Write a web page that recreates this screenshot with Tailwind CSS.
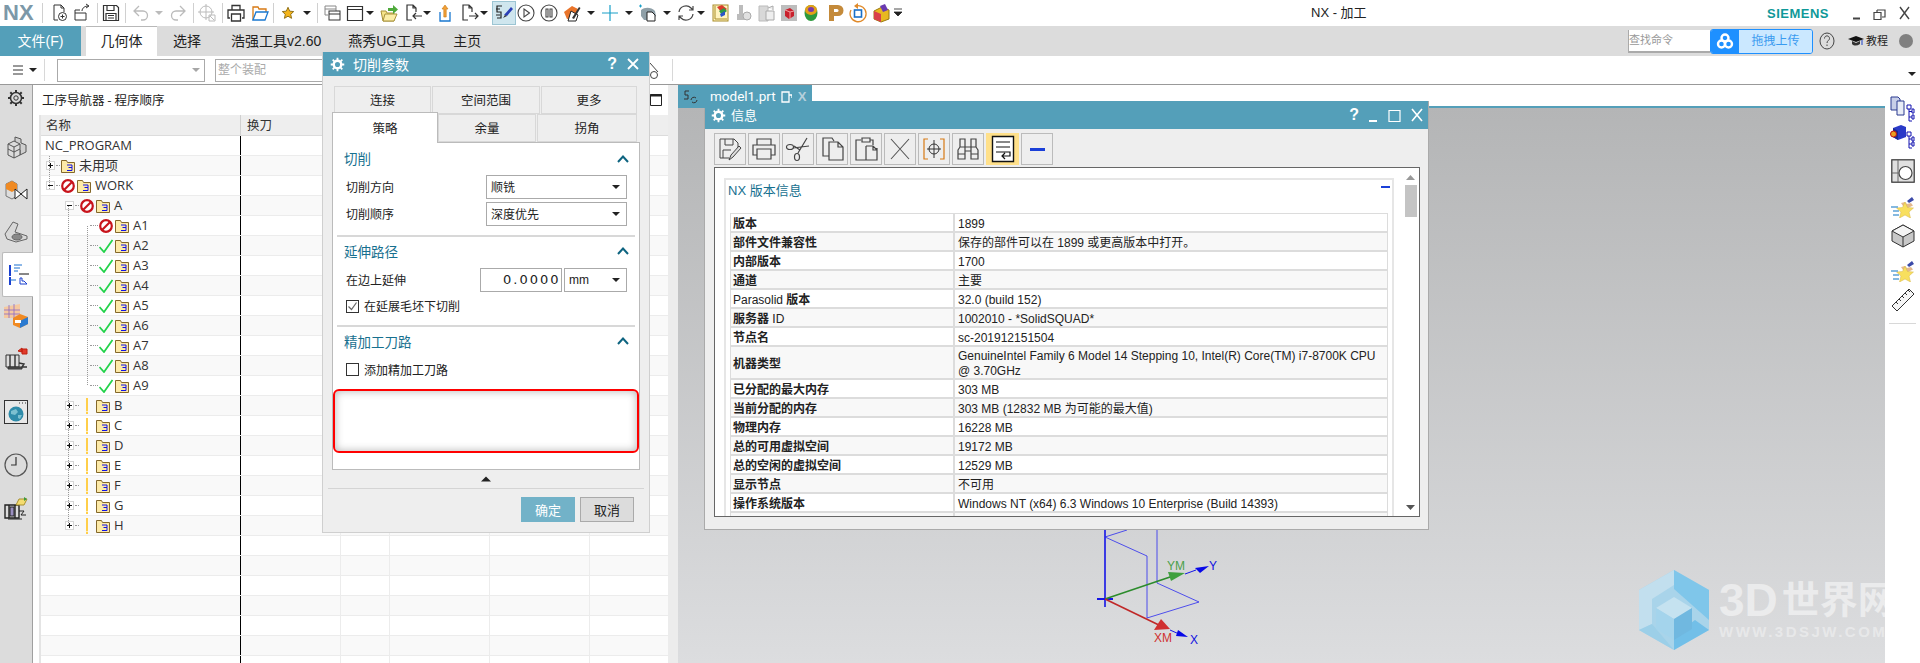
<!DOCTYPE html>
<html lang="zh">
<head>
    <meta charset="UTF-8">
    <title>NX - 加工</title>
    <script src="https://cdn.jsdelivr.net/npm/@tailwindcss/browser@4"></script>
</head>
<body class="bg-white text-[#222] font-['Liberation_Sans','Noto_Sans_CJK_SC',sans-serif] overflow-hidden">

<!-- shared icons -->
<svg class="hidden">
    <symbol id="dd" viewBox="0 0 8 20"><path d="M0 8h8l-4 4z" fill="#222"/></symbol>
    <symbol id="folder" viewBox="0 0 14 14">
        <path d="M.5 13.500V1.500h5l1 2h7v10z" fill="#fdeaa8" stroke="#84682a"/>
        <path d="M6 6h5v2.500H7.500M11 8.500v3H6" fill="none" stroke="#1212e6"/>
    </symbol>
    <symbol id="no" viewBox="0 0 14 14">
        <circle cx="7" cy="7" r="5.800" fill="#fff" stroke="#c8141c" stroke-width="2.200"/>
        <path d="M3 11L11 3" stroke="#c8141c" stroke-width="2.200"/>
    </symbol>
    <symbol id="check" viewBox="0 0 14 14"><path d="M.5 8l4.500 5L13.500 1" fill="none" stroke="#22d24a" stroke-width="1.800"/></symbol>
    <symbol id="plusbox" viewBox="0 0 9 9"><rect x=".5" y=".5" width="8" height="8" fill="#fff" stroke="#d5d5d5"/><path d="M2 4.500h5M4.500 2v5" stroke="#111"/></symbol>
    <symbol id="minusbox" viewBox="0 0 9 9"><rect x=".5" y=".5" width="8" height="8" fill="#fff" stroke="#d5d5d5"/><path d="M2 4.500h5" stroke="#111"/></symbol>
    <symbol id="gear" viewBox="0 0 20 20">
        <circle cx="10" cy="10" r="5" fill="none" stroke="currentColor" stroke-width="3.200"/>
        <path d="M10 1v3M10 16v3M1 10h3M16 10h3M3.600 3.600l2.200 2.200M14.200 14.200l2.200 2.200M3.600 16.400l2.200-2.200M14.200 5.800l2.200-2.200" stroke="currentColor" stroke-width="2.400"/>
    </symbol>
    <symbol id="gearthin" viewBox="0 0 20 20">
        <circle cx="10" cy="10" r="5.500" fill="none" stroke="currentColor" stroke-width="1.500"/>
        <circle cx="10" cy="10" r="2.200" fill="none" stroke="currentColor"/>
        <path d="M10 2v2.500M10 15.500V18M2 10h2.500M15.500 10H18M4.300 4.300L6 6M14 14l1.700 1.700M4.300 15.700L6 14M14 6l1.700-1.700" stroke="currentColor" stroke-width="2"/>
    </symbol>
    <symbol id="favhand" viewBox="0 0 24 24">
        <path d="M12 12l3 3 7-3.500-2-2.500-4 1-2-2-4 1z" fill="#e3b98f"/><path d="M16 7l5-4 2 3-5 3z" fill="#3c4aa8"/>
        <path d="M14 8l2.500 5.500 6 .5-4.500 4 1.500 6-5.500-3-5.500 3 1.500-6-4.500-4 6-.5z" fill="#f8df5e" stroke="#d6b648" stroke-width=".5"/>
        <path d="M0 13h7M2 17h6M2 21h6" stroke="#5da3d6" stroke-width="1.400"/>
    </symbol>
    <symbol id="tabupchev" viewBox="0 0 12 8"><path d="M1 7l5-5.500L11 7" fill="none" stroke="#0e6480" stroke-width="2"/></symbol>
</svg>

<div class="relative w-[1920px] h-[663px] overflow-hidden flex flex-col">

    <!-- title bar -->
    <div class="h-[26px] flex items-center shrink-0">
        <span class="ml-[3px] w-[34px] text-[22px] leading-none font-bold text-[#7c98a8]">NX</span>
        <span class="ml-[5px] w-px h-[20px] bg-[#d0d0d0]"></span>
        <svg class="ml-[7px] w-[20px] h-[20px]" viewBox="0 0 20 20" fill="none" stroke="#333"><path d="M8 17H4V2h7l3 3v4M11 2v3h3"/><circle cx="12.500" cy="13.500" r="4"/><path d="M10.500 13.500h4M12.500 11.500v4"/></svg>
        <svg class="ml-[2px] w-[20px] h-[20px]" viewBox="0 0 20 20" fill="none" stroke="#333"><path d="M3 10h11v7H3zM3 10V7h5M10 8c0-3 3-5 6-5M14 1l3 2-3 2"/></svg>
        <span class="ml-[5px] w-px h-[20px] bg-[#d0d0d0]"></span>
        <svg class="ml-[3px] w-[20px] h-[20px]" viewBox="0 0 20 20" fill="none" stroke="#333" stroke-width="1.200"><path d="M2.500 2.500h13l2 2v13h-15z"/><path d="M6 2.500v5h7v-5M5 17.500v-7h10v7M7 12.500h6M7 15h6"/></svg>
        <span class="ml-[4px] w-px h-[20px] bg-[#d0d0d0]"></span>
        <svg class="ml-[5px] w-[20px] h-[20px]" viewBox="0 0 20 20" fill="none" stroke="#bbb" stroke-width="1.300"><path d="M8 3L3 8l5 5M3 8h9a4.500 4.500 0 0 1 0 9h-2"/></svg>
        <svg class="ml-[4px] w-[8px] h-[20px] opacity-30"><use href="#dd"/></svg>
        <svg class="ml-[5px] w-[20px] h-[20px]" viewBox="0 0 20 20" fill="none" stroke="#bbb" stroke-width="1.300"><path d="M12 3l5 5-5 5M17 8H8a4.500 4.500 0 0 0 0 9h2"/></svg>
        <span class="ml-[5px] w-px h-[20px] bg-[#d0d0d0]"></span>
        <svg class="ml-[3px] w-[20px] h-[20px]" viewBox="0 0 20 20" fill="none" stroke="#bbb"><circle cx="9" cy="9" r="6"/><path d="M9 1v16M1 9h16M12 12h6v6h-6zM13 13l4 4"/></svg>
        <span class="ml-[5px] w-px h-[20px] bg-[#d0d0d0]"></span>
        <svg class="ml-[3px] w-[20px] h-[20px]" viewBox="0 0 20 20" fill="none" stroke="#333" stroke-width="1.300"><path d="M6 7V2.500h8V7M4 15H2V7h16v8h-2M5.500 11h9v7h-9z"/></svg>
        <svg class="ml-[4px] w-[20px] h-[20px]" viewBox="0 0 20 20" fill="none" stroke="#1a78d0" stroke-width="1.300"><path d="M3 17V4h5l1 2h7v3" stroke="#d87a14"/><path d="M3 17l3-8h12l-3 8z"/></svg>
        <span class="ml-[3px] w-px h-[20px] bg-[#d0d0d0]"></span>
        <svg class="ml-[4px] w-[20px] h-[20px]" viewBox="-4 -4 28 28"><path d="M10 2l2.400 5.400 5.600.6-4.200 3.800 1.200 5.700-5-3-5 3 1.200-5.700L2 8l5.600-.6z" fill="#f4b41a" stroke="#8a6a10" stroke-width="1.300"/></svg>
        <svg class="ml-[5px] w-[8px] h-[20px]"><use href="#dd"/></svg>
        <span class="ml-[6px] w-px h-[20px] bg-[#d0d0d0]"></span>
        <svg class="ml-[4px] w-[20px] h-[20px]" viewBox="0 0 20 20" fill="none" stroke="#888"><path d="M3 3h11v9h-2M3 3v9h3M3 6h11"/><rect x="7" y="8" width="11" height="9" fill="#fff" stroke="#333"/><path d="M7 11h11" stroke="#333"/></svg>
        <svg class="ml-[3px] w-[20px] h-[20px]" viewBox="0 0 20 20" fill="none" stroke="#333" stroke-width="1.200"><path d="M2.500 3.500h15v14h-15zM2.500 6.500h15"/></svg>
        <svg class="ml-px w-[8px] h-[20px]"><use href="#dd"/></svg>
        <svg class="ml-[5px] w-[20px] h-[20px]" viewBox="0 0 20 20"><path d="M2 8h5l1 2h7v8H4z" fill="#f6e48a" stroke="#a8923a"/><path d="M4 18L6 11h12l-3 7z" fill="#fbeea8" stroke="#a8923a"/><path d="M9 5h5V2l5 4.500L14 11V8H9z" fill="#4eaa3c"/></svg>
        <svg class="ml-[4px] w-[20px] h-[20px]" viewBox="0 0 20 20" fill="none" stroke="#333" stroke-width="1.200"><path d="M9 17H4V2h6l3 3v4M10 2v3h3M19 13h-9M13 10l-3 3 3 3"/></svg>
        <svg class="w-[8px] h-[20px]"><use href="#dd"/></svg>
        <svg class="ml-[4px] w-[20px] h-[20px]" viewBox="0 0 20 20" fill="none"><path d="M5 9v9h10V9" stroke="#1a78d0" stroke-width="1.300"/><path d="M10 2l3 4h-1.800v8H8.800V6H7z" fill="#f2a038" stroke="#c87810" stroke-width=".6"/></svg>
        <svg class="ml-[4px] w-[20px] h-[20px]" viewBox="0 0 20 20" fill="none" stroke="#333" stroke-width="1.200"><path d="M9 17H4V2h6l3 3v4M10 2v3h3M10 13h9M16 10l3 3-3 3"/></svg>
        <svg class="ml-px w-[8px] h-[20px]"><use href="#dd"/></svg>
        <div class="ml-[4px] w-[24px] h-[24px] bg-[#cfe6ee] border border-[#9cc5d3] flex items-center justify-center">
            <svg class="w-[20px] h-[20px]" viewBox="0 0 20 20" fill="none"><path d="M8 3H3v6h4v6H3M2 6h4M2 12h4" stroke="#222" stroke-width="1.200"/><path d="M10 12l7-8 2 2-6 7z" fill="#2b3fb6"/><path d="M9 15l2-3 2 1z" fill="#333"/></svg>
        </div>
        <svg class="w-[20px] h-[20px]" viewBox="0 0 20 20" fill="none" stroke="#444" stroke-width="1.100"><circle cx="10" cy="10" r="8"/><path d="M8 6l5.500 4L8 14z"/></svg>
        <svg class="ml-[3px] w-[20px] h-[20px]" viewBox="0 0 20 20" fill="none" stroke="#444" stroke-width="1.100"><circle cx="10" cy="10" r="8"/><path d="M7 6h2v8H7zM11 6h2v8h-2z"/></svg>
        <svg class="ml-[3px] w-[20px] h-[20px]" viewBox="0 0 20 20"><path d="M2 9l8-6 6 3-4 9-7 1z" fill="#e9742a"/><path d="M9 8l7 4-2 6H6z" fill="#fff" stroke="#222"/><path d="M10 15l7-11 1.500 1L12 16z" fill="#333"/></svg>
        <svg class="ml-[5px] w-[8px] h-[20px]"><use href="#dd"/></svg>
        <svg class="ml-[5px] w-[20px] h-[20px]" viewBox="0 0 20 20"><path d="M10 2v16M2 10h16" stroke="#1aa0c8" stroke-width="1.200"/></svg>
        <svg class="ml-[5px] w-[8px] h-[20px]"><use href="#dd"/></svg>
        <svg class="ml-[5px] w-[20px] h-[20px]" viewBox="0 0 20 20"><path d="M3 7c4-3 10-3 14 1l1 5-5 4H6L3 13z" fill="#8fa0a8"/><path d="M1 3l3 0M2.500 1.500v3" stroke="#1aa0c8"/><path d="M9 9h5l3 3v6H9z" fill="#fff" stroke="#222"/></svg>
        <svg class="ml-[5px] w-[8px] h-[20px]"><use href="#dd"/></svg>
        <svg class="ml-[5px] w-[20px] h-[20px]" viewBox="0 0 20 20" fill="none" stroke="#444" stroke-width="1.200"><path d="M3 9a7 7 0 0 1 12-4l2 2M17 3v4h-4M17 11a7 7 0 0 1-12 4l-2-2M3 17v-4h4"/></svg>
        <svg class="ml-px w-[8px] h-[20px]"><use href="#dd"/></svg>
        <svg class="ml-[5px] w-[20px] h-[20px]" viewBox="0 0 20 20"><rect x="3" y="2" width="15" height="16" fill="#fff4c0" stroke="#a88c28"/><path d="M7 4l5-2 5 4-5 4z" fill="#d93a2a"/><path d="M9 8l5-3 3 3-5 4z" fill="#2f9a44"/><path d="M10 11l5-3v4l-4 2z" fill="#2a55c8"/><path d="M5 3v13h12" stroke="#a88c28" fill="none"/></svg>
        <svg class="ml-[3px] w-[20px] h-[20px]" viewBox="0 0 20 20"><path d="M6 2h4v9h3v6H4v-6h2z" fill="#bcbcbc"/><circle cx="14" cy="13" r="4" fill="#e0e0e0" stroke="#aaa"/></svg>
        <svg class="ml-[3px] w-[20px] h-[20px]" viewBox="0 0 20 20"><path d="M3 3h9v15H3z" fill="#d8d8d8" stroke="#bbb"/><path d="M10 8h8v9h-8zM12 5l5-2v4" fill="#eee" stroke="#aaa"/></svg>
        <svg class="ml-[3px] w-[20px] h-[20px]" viewBox="0 0 20 20"><rect x="2" y="2" width="16" height="16" fill="#bdbdbd"/><path d="M6 7l5-2 4 3v5l-5 3-4-3z" fill="#c8202c"/><path d="M6 7l5 2 4-1M11 9v7" stroke="#f4a0a0" fill="none"/></svg>
        <svg class="ml-[2px] w-[20px] h-[20px]" viewBox="0 0 20 20"><ellipse cx="10" cy="10" rx="6.500" ry="8" fill="#2c9a3c"/><ellipse cx="10" cy="7" rx="6" ry="5" fill="#e2a018"/><ellipse cx="10" cy="6.500" rx="3" ry="2.500" fill="#7a3aa8"/></svg>
        <svg class="ml-[5px] w-[20px] h-[20px]" viewBox="0 0 20 20"><path d="M3 2h9a5.500 5.500 0 0 1 0 11H8v5H3z" fill="#c48a3a"/><path d="M8 6h3a1.500 1.500 0 0 1 0 3H8z" fill="#fff"/></svg>
        <svg class="ml-[2px] w-[20px] h-[20px]" viewBox="0 0 20 20" fill="none"><path d="M8 3a8 8 0 1 1-5 4" stroke="#e08a2a" stroke-width="1.300"/><path d="M10 0v6L6 3z" fill="#e08a2a"/><rect x="6.500" y="7" width="7" height="7" stroke="#1a70c8" stroke-width="1.600"/></svg>
        <svg class="ml-[4px] w-[20px] h-[20px]" viewBox="0 0 20 20"><path d="M2 8l8-4 7 3v9l-8 3-7-3z" fill="#e8b820" stroke="#9a7a10"/><path d="M2 8l7 3v8l-7-3z" fill="#d8404a"/><path d="M8 3l5-2 3 6-5 2z" fill="#6a3ab0"/></svg>
        <svg class="ml-[2px] w-[8px] h-[20px]" viewBox="0 0 8 20"><path d="M0 6h8M0 9h8l-4 4z" stroke="#222" fill="#222" stroke-width=".8"/></svg>

        <span class="absolute left-[1311px] top-[5px] text-[13px] leading-[16px]">NX - 加工</span>
        <span class="absolute left-[1767px] top-[6px] text-[13px] leading-[16px] font-bold tracking-[.5px] text-[#0f9999]">SIEMENS</span>
        <svg class="absolute left-[1850px] top-[4px] w-[64px] h-[18px]" viewBox="0 0 64 18" fill="none" stroke="#444"><path d="M3 14.500h7" stroke-width="2"/><path d="M27 6h8v7h-3M27 6v2M24 8.500h7v7h-7z" stroke-width="1.200"/><path d="M50 3l9 12M59 3l-9 12" stroke-width="1.400"/></svg>
    </div>

    <!-- ribbon tabs -->
    <div class="h-[30px] bg-[#dcdcdc] flex shrink-0 text-[14px]">
        <div class="w-[81px] bg-[#549fb9] text-white flex items-center justify-center">文件(F)</div>
        <div class="ml-[5px] w-[71px] bg-white border-t border-[#b8b8b8] flex items-center justify-center">几何体</div>
        <div class="ml-[16px] flex items-center">选择</div>
        <div class="ml-[30px] flex items-center">浩强工具v2.60</div>
        <div class="ml-[27px] flex items-center">燕秀UG工具</div>
        <div class="ml-[28px] flex items-center">主页</div>
        <div class="ml-auto flex items-center">
            <div class="w-[82px] h-[23px] bg-white border-b-2 border-l border-[#aaa] text-[11px] text-[#999] flex items-center">查找命令</div>
            <div class="w-[103px] h-[25px] rounded-[3px] border border-[#1e90ff] flex overflow-hidden">
                <div class="w-[28px] bg-[#1e90ff] flex items-center justify-center">
                    <svg class="w-[18px] h-[18px]" viewBox="0 0 18 18" fill="none" stroke="#fff" stroke-width="2.400"><circle cx="9" cy="6" r="3.500"/><circle cx="5.500" cy="12" r="3.500"/><circle cx="12.500" cy="12" r="3.500"/></svg>
                </div>
                <div class="flex-1 bg-[#cbe8ff] text-[#3a9bf0] text-[12px] flex items-center justify-center">拖拽上传</div>
            </div>
            <svg class="ml-[5px] w-[18px] h-[18px]" viewBox="0 0 18 18" fill="none" stroke="#444"><ellipse cx="9" cy="9" rx="7" ry="8"/><path d="M6.500 6.500c0-3.500 5-3.500 5 0 0 2-2.500 2-2.500 4.500M9 12.500v1.500"/></svg>
            <svg class="ml-[12px] w-[16px] h-[14px]" viewBox="0 0 16 14"><path d="M0 5l8-3 8 3-8 3z" fill="#111"/><path d="M4 7v3c2 2 5 2 8 0V7l-4 2z" fill="#333"/><path d="M14 6v5" stroke="#1a40c8"/></svg>
            <span class="ml-[2px] w-[22px] text-[11px]">教程</span>
            <span class="ml-[11px] mr-[7px] w-[14px] h-[14px] rounded-full bg-[#808080]"></span>
        </div>
    </div>

    <!-- selection bar -->
    <div class="relative h-[29px] border-b border-[#999] flex items-center shrink-0">
        <svg class="ml-[12px] w-[12px] h-[12px]" viewBox="0 0 12 12" stroke="#333"><path d="M1 2h10M1 6h10M1 10h10"/></svg>
        <svg class="ml-[5px] w-[8px] h-[20px]"><use href="#dd"/></svg>
        <span class="ml-[7px] w-px h-[22px] bg-[#d8d8d8]"></span>
        <div class="ml-[12px] w-[148px] h-[23px] border border-[#aaa] flex items-center justify-end pr-[4px]"><svg class="w-[8px] h-[20px] opacity-40"><use href="#dd"/></svg></div>
        <div class="ml-[10px] w-[120px] h-[23px] border border-[#aaa] text-[12px] text-[#aaa] pl-[2px] flex items-center">整个装配</div>
        <svg class="absolute left-[650px] top-[4px] w-[10px] h-[20px]" viewBox="0 0 10 20" fill="none" stroke="#444"><path d="M0 3l8 9"/><circle cx="4" cy="15" r="3.500"/></svg>
        <span class="absolute left-[672px] top-[3px] w-px h-[22px] bg-[#d8d8d8]"></span>
        <svg class="absolute left-[1908px] top-[8px] w-[8px] h-[20px]"><use href="#dd"/></svg>
    </div>

    <!-- main area -->
    <div class="flex-1 flex min-h-0">

        <!-- resource bar -->
        <div class="w-[33px] shrink-0 bg-[#dcdcdc] border-r border-[#a0a0a0] flex flex-col items-center">
            <svg class="mt-[3px] w-[20px] h-[20px] text-[#333]"><use href="#gearthin"/></svg>
            <svg class="mt-[27px] w-[24px] h-[24px]" viewBox="0 0 24 24" stroke="#555" fill="#dcdcdc"><path d="M11 2l6 2v4l5 2v7l-6 3v-5l-5-3z" fill="#cfcfcf"/><path d="M4 9l6-3 6 3v11l-6 3-6-3z"/><path d="M4 14l6 3 6-3M10 17v6M4 9l6 3 6-3M10 12v5" fill="none"/></svg>
            <svg class="mt-[19px] w-[24px] h-[24px]" viewBox="0 0 24 24"><path d="M2 6l6-3 5 3v12l-5 3-6-3z" fill="#ddd" stroke="#777"/><path d="M2 6l6-3 5 3v5l-5 3-6-3z" fill="#f08a22"/><path d="M11 11l12 10V11L11 21z" fill="#fff" stroke="#222"/></svg>
            <svg class="mt-[18px] w-[24px] h-[24px]" viewBox="0 0 24 24" stroke="#666"><path d="M1 14L9 2l5 2-3 8 12 4v3l-11 3-9-3z" fill="#d8d8d8"/><ellipse cx="13" cy="17" rx="5" ry="3" fill="#888"/></svg>
            <div class="mt-[8px] ml-[-2px] mr-[-1px] w-[31px] self-end h-[45px] bg-white border border-r-0 border-[#bbb] rounded-l-[2px] flex items-center justify-center">
                <svg class="w-[22px] h-[24px]" viewBox="0 0 22 24" fill="none"><path d="M3 2v11M3 14v8" stroke="#1a40d0" stroke-width="2"/><path d="M3 17h6M7 2h8M7 5h6M7 8h4" stroke="#1a70d0"/><path d="M12 11h10" stroke="#111"/><path d="M13 15v6h7l-3-3h-2v-3z" stroke="#1a40d0"/></svg>
            </div>
            <svg class="mt-[7px] w-[24px] h-[24px]" viewBox="0 0 24 24"><path d="M0 3l16-3v14H0z" fill="#f5c9a0"/><path d="M0 6h16M0 10h16M5 1v13M10 0v14" stroke="#8a6ac8" stroke-width=".8"/><path d="M9 14l7-4 8 3v7l-8 4-7-3z" fill="#f08a22"/><path d="M16 17l8-4v7l-8 4z" fill="#2a7ad0"/><rect x="11" y="16" width="6" height="3" fill="#fff"/></svg>
            <svg class="mt-[19px] w-[24px] h-[24px]" viewBox="0 0 24 24" fill="none" stroke="#333"><path d="M2 8h13v12H2z" fill="#ddd"/><path d="M6 8v12M11 8v12M15 16l5 1-2 3h5" stroke-width="1.400"/><path d="M4 20h14v2H4z" fill="#555"/><path d="M14 4l4-3v4zM18 2h5v5h-5z" fill="#e03a2a" stroke="#c02010"/></svg>
            <svg class="mt-[29px] w-[24px] h-[24px]" viewBox="0 0 24 24"><rect x=".5" y=".5" width="23" height="23" fill="#e8e8e8" stroke="#333"/><circle cx="12" cy="14" r="7.500" fill="#2f8caa"/><path d="M7 11l5-2 2 3-3 3-4-1zM14 15l4 0-2 4-2-1z" fill="#7cc0d0"/><path d="M15 3h1M18 3h1M21 3h1" stroke="#333"/></svg>
            <svg class="mt-[29px] w-[24px] h-[24px]" viewBox="0 0 24 24" fill="none" stroke="#555" stroke-width="1.200"><circle cx="12" cy="12" r="11"/><path d="M12 4v8H7" stroke="#333"/></svg>
            <svg class="mt-[19px] w-[24px] h-[24px]" viewBox="0 0 24 24" stroke="#222" fill="none"><path d="M1 9h14v13H1zM5 9v13M11 9v13" stroke-width="1.400"/><rect x="6" y="11" width="4" height="9" fill="#9a8fc0"/><path d="M15 15l5 0-3 4h5M4 23h14"/><path d="M13 7l2-4h8l-3 6h-8z" fill="#f4dc70" stroke="#a89030"/><path d="M20 1l3 2-3 2z" fill="#3c9a3c" stroke="none"/></svg>
        </div>

        <!-- operation navigator -->
        <div class="w-[635px] shrink-0 flex flex-col bg-white">
            <div class="h-[30px] shrink-0 flex items-center pl-[9px] pr-[6px] text-[12.500px] font-['Noto_Sans_CJK_SC',sans-serif]">
                <span>工序导航器 - 程序顺序</span>
                <svg class="ml-auto w-[12px] h-[12px]" viewBox="0 0 12 12" fill="none" stroke="#222"><path d="M.5 .5h11v11H.5z"/><path d="M0 1.500h12" stroke-width="2"/></svg>
            </div>
            <div class="ml-[6px] flex-1 border-l-2 border-[#e4e4e4] relative overflow-hidden">
                <div class="h-[21px] bg-[#eeeeee] border-b border-[#dcdcdc] flex text-[12.500px] text-[#333] font-['Noto_Sans_CJK_SC',sans-serif]">
                    <div class="w-[200px] pl-[5px] border-r border-[#d0d0d0] flex items-center">名称</div>
                    <div class="w-[100px] pl-[6px] border-r border-[#d8d8d8] flex items-center">换刀</div>
                    <div class="w-[49px] border-r border-[#d8d8d8]"></div>
                    <div class="w-[100px] border-r border-[#d8d8d8]"></div>
                    <div class="w-[100px] border-r border-[#d8d8d8]"></div>
                </div>
                <div id="tree"></div>
                <!-- tree connector lines -->
                <svg class="absolute left-0 top-0 w-[200px] h-[420px] pointer-events-none" fill="none" stroke="#999" stroke-dasharray="1 1">
                    <path d="M8.500 41v33M27.500 91v320M46.500 111v160"/>
                </svg>
            </div>
        </div>
        <div class="w-[10px] shrink-0 bg-[#ececec]"></div>

        <!-- graphics window -->
        <div class="flex-1 flex flex-col min-w-0">
            <div class="h-[21px] shrink-0 bg-white">
                <div class="w-[134px] h-[23px] bg-[#549fb9] text-white flex items-center relative z-10">
                    <svg class="ml-[5px] w-[16px] h-[16px]" viewBox="0 0 16 16" fill="none" stroke="#333"><path d="M6 2H2v4h3v4H1"/><path d="M8 11a3 3 0 0 1 5-2M14 11a3 3 0 0 1-5 2"/></svg>
                    <span class="ml-[11px] text-[13.500px] font-['Roboto',sans-serif]">model1.prt</span>
                    <svg class="ml-[5px] w-[11px] h-[12px]" viewBox="0 0 11 12" fill="none" stroke="#fff" stroke-width="1.300"><path d="M1 1h7v10H1zM8 4h3v3"/></svg>
                    <span class="ml-[6px] text-[13px] text-[#b4d0dc] font-bold">X</span>
                </div>
            </div>
            <div class="h-[2px] shrink-0 bg-[#549fb9]"></div>
            <div class="relative flex-1 overflow-hidden bg-gradient-to-b from-[#b4b5b6] to-[#dcdddf]">
                <!-- part wireframe + WCS, coordinates relative to window at 678,108 -->
                <svg class="absolute left-[400px] top-[400px] w-[150px] h-[155px]" viewBox="1078 508 150 155" fill="none">
                    <path d="M1105 508v99" stroke="#1515e6" stroke-width="1.600"/>
                    <path d="M1097 599h16" stroke="#1515e6" stroke-width="2"/>
                    <path d="M1127 530l-22 7 42 19v62M1157 508v75l42 19-52 16" stroke="#2a2af0" stroke-width=".8"/>
                    <path d="M1105 599l68-23" stroke="#2c8c2c" stroke-width="1.600"/>
                    <path d="M1168 572l17 1-14 8z" fill="#3fa03f"/>
                    <path d="M1185 574l11-4" stroke="#1515e6"/>
                    <path d="M1195 568l14-2-9 7z" fill="#0808e8"/>
                    <path d="M1105 599l58 28" stroke="#c02828" stroke-width="1.600"/>
                    <path d="M1154 630l16-1-9-10z" fill="#d03030"/>
                    <path d="M1170 630l9 4" stroke="#1515e6"/>
                    <path d="M1178 630l10 7-12-1z" fill="#0808e8"/>
                </svg>
                <span class="absolute left-[489px] top-[451px] text-[12px] leading-[14px] text-[#4aa04a]">YM</span>
                <span class="absolute left-[531px] top-[451px] text-[12px] leading-[14px] text-[#1010e0]">Y</span>
                <span class="absolute left-[476px] top-[523px] text-[12px] leading-[14px] text-[#d03030]">XM</span>
                <span class="absolute left-[512px] top-[525px] text-[12px] leading-[14px] text-[#1010e0]">X</span>
                <!-- watermark -->
                <svg class="absolute left-[960px] top-[461px] w-[72px] h-[82px]" viewBox="0 0 72 82">
                    <path d="M36 1L71 21v40L36 81 1 61V21z" fill="#a9d4ea"/>
                    <path d="M36 1L71 21v30L36 20z" fill="#7fc6ea"/>
                    <path d="M1 21L36 1v15L14 30v25L1 61z" fill="#c2dfee"/>
                    <path d="M1 61l13-6 22 26z" fill="#9ccfe8"/>
                    <path d="M36 81l35-20-14-10-21 16z" fill="#72bfe8"/>
                    <path d="M36 28l18 11-18 11-18-11z" fill="#c5e2f0"/>
                    <path d="M18 39l18 11v21L18 60z" fill="#a4d4ec"/>
                    <path d="M54 39L36 50v21l18-11z" fill="#70b8e0"/>
                </svg>
                <div class="absolute left-[1041px] top-[470px] h-[44px] flex items-center gap-[4px] whitespace-nowrap font-bold text-white/50">
                    <span class="text-[46px] leading-[44px]">3D</span><span class="text-[38px] leading-[44px]">世界网</span>
                </div>
                <div class="absolute left-[1041px] top-[514px] whitespace-nowrap text-[15px] leading-[20px] font-bold tracking-[2.500px] text-white/40">WWW.3DSJW.COM</div>
            </div>
        </div>

        <!-- right resource bar -->
        <div class="w-[35px] shrink-0 bg-white flex flex-col items-center">
            <svg class="mt-[11px] w-[25px] h-[28px]" viewBox="0 0 25 28" fill="none"><path d="M1 1h7l2 2v11H1z" fill="#c8cfe8" stroke="#2a3a90"/><path d="M7 5h7v14H7z" fill="#e8ecf6" stroke="#2a3a90"/><path d="M17 9h4v4h-4zM19 13v5M19 15.500h3M22 13h2v4h-2zM19 18v7M19 21h3M22 19h2v4h-2zM19 25h3" stroke="#1212b0"/></svg>
            <svg class="mt-[0px] w-[25px] h-[28px]" viewBox="0 0 25 28" fill="none"><path d="M3 4l8-3 5 2v10l-8 3-5-3z" fill="#2a3ac8"/><path d="M3 4l5 3v9l-5-3z" fill="#1a2a90"/><circle cx="3.500" cy="10" r="3" fill="#e8a020" stroke="#c01010"/><path d="M17 8h4v4h-4zM19 12v5M19 15h3M22 13h2v4h-2zM19 17v7M19 20h3M22 18h2v4h-2zM19 24h3" stroke="#1212b0"/></svg>
            <svg class="mt-[7px] w-[24px] h-[24px]" viewBox="0 0 24 24"><rect x=".8" y=".8" width="22.400" height="22.400" fill="#e0e0e0" stroke="#333" stroke-width="1.200"/><path d="M7 1v22M1 14h6" stroke="#666"/><circle cx="14.500" cy="14" r="6.500" fill="#fff" stroke="#444" stroke-width="1.200"/></svg>
            <svg class="mt-[11px] w-[24px] h-[24px]"><use href="#favhand"/></svg>
            <svg class="mt-[6px] w-[24px] h-[24px]" viewBox="0 0 24 24"><path d="M12 1l11 6v10l-11 6-11-6V7z" fill="#c8c8c8" stroke="#333"/><path d="M1 7l11 6 11-6-11-6z" fill="#f4f4f4" stroke="#333"/><path d="M12 13v10" stroke="#333"/></svg>
            <svg class="mt-[10px] w-[24px] h-[24px]"><use href="#favhand"/></svg>
            <svg class="mt-[6px] w-[24px] h-[24px]" viewBox="0 0 24 24" fill="none" stroke="#333"><path d="M1 18L18 1l5 5L6 23z" fill="#f6f6f6"/><path d="M5 14l2 2M8 11l2 2M11 8l2 2M14 5l2 2M17 2l2 2"/></svg>
            <span class="mt-[11px] w-[27px] h-px bg-[#d8d8d8]"></span>
        </div>
    </div>

    <!-- 切削参数 dialog -->
    <div class="absolute left-[322px] top-[52px] w-[328px] h-[481px] bg-[#eeeeee] border border-[#cfcfcf] border-t-0 text-[12px] font-['Noto_Sans_CJK_SC',sans-serif]">
        <div class="h-[24px] bg-[#549fb9] text-white flex items-center pl-[7px] pr-[10px]">
            <svg class="w-[15px] h-[15px] text-white"><use href="#gear"/></svg>
            <span class="ml-[8px] text-[14px] leading-none">切削参数</span>
            <span class="ml-auto font-['Liberation_Sans'] font-bold text-[16px]">?</span>
            <svg class="ml-[10px] w-[12px] h-[12px]" viewBox="0 0 12 12" stroke="#fff" stroke-width="1.800"><path d="M1 1l10 10M11 1L1 11"/></svg>
        </div>
        <div class="mt-[10px] ml-[11px] flex gap-px h-[28px] text-[12.500px]">
            <div class="w-[97px] border border-[#d8d8d8] flex items-center justify-center">连接</div>
            <div class="w-[108px] border border-[#d8d8d8] flex items-center justify-center">空间范围</div>
            <div class="w-[96px] border border-[#d8d8d8] flex items-center justify-center">更多</div>
        </div>
        <div class="ml-[9px] flex items-end h-[28px] text-[12.500px]">
            <div class="relative z-10 w-[106px] h-[31px] -mb-px bg-white border border-b-0 border-[#bbb] flex items-center justify-center">策略</div>
            <div class="w-[98px] h-[28px] border border-[#d8d8d8] flex items-center justify-center">余量</div>
            <div class="ml-px w-[100px] h-[28px] border border-[#d8d8d8] flex items-center justify-center">拐角</div>
        </div>
        <div class="ml-[9px] w-[308px] h-[328px] bg-white border border-[#bbb]">
            <div class="h-[31px] flex items-center justify-between pl-[11px] pr-[10px] text-[13.500px] text-[#17708f]">
                <span>切削</span><svg class="w-[12px] h-[8px]"><use href="#tabupchev"/></svg>
            </div>
            <div class="mt-px h-[24px] flex items-center justify-between pl-[13px] pr-[12px]">
                <span>切削方向</span>
                <div class="w-[141px] h-[24px] border border-[#aaa] flex items-center justify-between pl-[4px] pr-[6px]"><span>顺铣</span><svg class="w-[8px] h-[20px]"><use href="#dd"/></svg></div>
            </div>
            <div class="mt-[3px] h-[24px] flex items-center justify-between pl-[13px] pr-[12px]">
                <span>切削顺序</span>
                <div class="w-[141px] h-[24px] border border-[#aaa] flex items-center justify-between pl-[4px] pr-[6px]"><span>深度优先</span><svg class="w-[8px] h-[20px]"><use href="#dd"/></svg></div>
            </div>
            <div class="mt-[9px] mx-[4px] h-[2px] bg-[#d8d8d8]"></div>
            <div class="h-[28px] flex items-center justify-between pl-[11px] pr-[10px] text-[13.500px] text-[#17708f]">
                <span>延伸路径</span><svg class="w-[12px] h-[8px]"><use href="#tabupchev"/></svg>
            </div>
            <div class="mt-[3px] h-[24px] flex items-center pl-[13px] pr-[12px]">
                <span>在边上延伸</span>
                <div class="ml-auto w-[82px] h-[24px] border border-[#aaa] overflow-hidden flex items-center pl-[22px] text-[13px] tracking-[2px] whitespace-nowrap font-['DejaVu_Sans']">0.00000</div>
                <div class="ml-[2px] w-[63px] h-[24px] border border-[#aaa] flex items-center justify-between pl-[4px] pr-[6px] font-['Liberation_Sans']"><span>mm</span><svg class="w-[8px] h-[20px]"><use href="#dd"/></svg></div>
            </div>
            <div class="mt-[7px] h-[14px] flex items-center pl-[13px]">
                <span class="w-[13px] h-[13px] border border-[#333] flex items-center justify-center"><svg class="w-[11px] h-[11px]" viewBox="0 0 11 11" fill="none" stroke="#666" stroke-width="1.200"><path d="M1.500 5.500l3 3 5-7"/></svg></span>
                <span class="ml-[5px]">在延展毛坯下切削</span>
            </div>
            <div class="mt-[12px] mx-[4px] h-[2px] bg-[#d8d8d8]"></div>
            <div class="h-[28px] flex items-center justify-between pl-[11px] pr-[10px] text-[13.500px] text-[#17708f]">
                <span>精加工刀路</span><svg class="w-[12px] h-[8px]"><use href="#tabupchev"/></svg>
            </div>
            <div class="mt-[8px] h-[13px] flex items-center pl-[13px]">
                <span class="w-[13px] h-[13px] border border-[#333]"></span>
                <span class="ml-[5px]">添加精加工刀路</span>
            </div>
            <div class="mt-[13px] h-[64px] border-2 border-[#f00] rounded-[6px] shadow-[inset_0_0_8px_rgba(0,0,0,0.3)]"></div>
        </div>
        <div class="h-[18px] flex items-center justify-center"><svg class="w-[10px] h-[6px]" viewBox="0 0 10 6"><path d="M0 5.500L5 .5l5 5z" fill="#222"/></svg></div>
        <div class="mx-[5px] h-px bg-[#d4d4d4]"></div>
        <div class="mt-[8px] pr-[15px] flex justify-end gap-[5px] text-[13px]">
            <div class="w-[54px] h-[25px] bg-[#72b2c8] text-white flex items-center justify-center">确定</div>
            <div class="w-[54px] h-[25px] bg-[#dcdcdc] border border-[#aaa] flex items-center justify-center">取消</div>
        </div>
    </div>

    <!-- 信息 dialog -->
    <div class="absolute left-[704px] top-[101px] w-[725px] h-[429px] bg-[#eeeeee] border-b border-r border-l border-[#aaa] flex flex-col">
        <div class="h-[28px] shrink-0 bg-[#549fb9] text-white flex items-center pl-[6px] pr-[3px] font-['Noto_Sans_CJK_SC',sans-serif]">
            <svg class="w-[15px] h-[15px]"><use href="#gear"/></svg>
            <span class="ml-[5px] text-[13px]">信息</span>
            <span class="ml-auto font-['Liberation_Sans'] font-bold text-[16px]">?</span>
            <svg class="ml-[10px] w-[56px] h-[16px]" viewBox="0 0 56 16" fill="none" stroke="#fff"><path d="M0 14h8" stroke-width="2"/><path d="M20 3.500h11v11H20z" stroke-width="1.200"/><path d="M43 2l10 12M53 2L43 14" stroke-width="1.600"/></svg>
        </div>
        <!-- toolbar -->
        <div class="mt-[4px] ml-[9px] flex gap-[2px] shrink-0">
            <div class="w-[32px] h-[32px] border border-[#bbb] flex items-center justify-center"><svg class="w-[26px] h-[26px]" viewBox="0 0 26 26" fill="none" stroke="#444"><path d="M3 3h14l4 4v6M3 3v19h9M8 3v6h8V3M6 22v-8h8"/><path d="M12 24l2-5 8-9 2 2-8 9z" fill="#ddd"/></svg></div>
            <div class="w-[32px] h-[32px] border border-[#bbb] flex items-center justify-center"><svg class="w-[26px] h-[26px]" viewBox="0 0 26 26" fill="none" stroke="#444" stroke-width="1.200"><path d="M6 9V3h14v6M6 19H2V9h22v10h-4M6 13h14v10H6z"/></svg></div>
            <div class="w-[32px] h-[32px] border border-[#bbb] flex items-center justify-center"><svg class="w-[26px] h-[26px]" viewBox="0 0 26 26" fill="none" stroke="#444" stroke-width="1.200"><ellipse cx="5" cy="11" rx="3.500" ry="2.500"/><ellipse cx="12" cy="21" rx="2.500" ry="3.500"/><path d="M8 12l16-2M13 17l9-15M9 10l6 4"/></svg></div>
            <div class="w-[32px] h-[32px] border border-[#bbb] flex items-center justify-center"><svg class="w-[26px] h-[26px]" viewBox="0 0 26 26" fill="none" stroke="#444" stroke-width="1.200"><path d="M10 20H4V2h9l2 3M10 6h9l5 5v13H10zM19 6v5h5"/></svg></div>
            <div class="w-[32px] h-[32px] border border-[#bbb] flex items-center justify-center"><svg class="w-[26px] h-[26px]" viewBox="0 0 26 26" fill="none" stroke="#444" stroke-width="1.200"><path d="M8 4H3v20h21V12M9 2h8v4H9zM17 4h3v5M13 10h7l4 4v0M13 10v14M20 10v4h4"/></svg></div>
            <div class="w-[32px] h-[32px] border border-[#bbb] flex items-center justify-center"><svg class="w-[26px] h-[26px]" viewBox="0 0 26 26" stroke="#555" stroke-width="1.100"><path d="M4 3l18 20M22 3L4 23"/></svg></div>
            <div class="w-[32px] h-[32px] border border-[#bbb] flex items-center justify-center"><svg class="w-[26px] h-[26px]" viewBox="0 0 26 26" fill="none"><path d="M7 3H3v20h4M19 3h4v20h-4" stroke="#d87a14" stroke-width="1.200"/><circle cx="13" cy="13" r="5" stroke="#333"/><path d="M13 4v18M6 13h14" stroke="#333"/></svg></div>
            <div class="w-[32px] h-[32px] border border-[#bbb] flex items-center justify-center"><svg class="w-[26px] h-[26px]" viewBox="0 0 26 26" fill="none" stroke="#444" stroke-width="1.200"><path d="M5 3h5v8H5zM16 3h5v8h-5zM3 14l2-3h5v12H3zM23 14l-2-3h-5v12h7zM10 11h6v4h-6zM3 18h7M16 18h7"/></svg></div>
            <div class="w-[33px] h-[32px] bg-[#ffe08a] flex items-center justify-center"><svg class="w-[24px] h-[28px]" viewBox="0 0 24 28" fill="none" stroke="#111"><path d="M1.500 1.500h21v25h-21z" fill="#fff" stroke-width="1.400"/><path d="M5 7h14M5 12h14M5 17h14v4h-8M14 18l-3 3 3 3" stroke-width="1.200"/></svg></div>
            <div class="w-[32px] h-[32px] border border-[#bbb] flex items-center justify-center"><span class="w-[15px] h-[3px] bg-[#1a3fd8]"></span></div>
        </div>
        <!-- text pane -->
        <div class="mt-[2px] ml-[9px] w-[706px] h-[350px] bg-white border border-[#666] flex overflow-hidden text-[12px]">
            <div class="w-[685px] shrink-0 overflow-hidden pt-[10px] pl-[9px]">
                <div class="w-[670px] border-2 border-[#e6e6e6] border-b-0 relative h-[400px]">
                    <div class="absolute right-[2px] top-[6px] w-[9px] h-[2px] bg-[#1a3fd8]"></div>
                    <div class="pl-[2px] pt-[1px] h-[33px] text-[13px] text-[#17708f]">NX 版本信息</div>
                    <div id="info" class="ml-[4px] w-[658px] border-t border-l border-r border-[#dcdcdc]"></div>
                </div>
            </div>
            <div class="relative flex-1">
                <svg class="absolute left-[5px] top-[6px] w-[11px] h-[7px]" viewBox="0 0 11 7"><path d="M1 6l4.500-5L10 6z" fill="#999"/></svg>
                <div class="absolute left-[5px] top-[17px] w-[12px] h-[32px] bg-[#c4c4c4]"></div>
                <svg class="absolute left-[5px] top-[336px] w-[11px] h-[7px]" viewBox="0 0 11 7"><path d="M1 1l4.500 5L10 1z" fill="#555"/></svg>
            </div>
        </div>
    </div>
</div>

<script>
    // operation tree: [left padding, expander, connector width, status, name]
    const treeRows = [
        [4, "", 0, "", "NC_PROGRAM"],
        [5, "plusbox", 6, "", "未用项"],
        [5, "minusbox", 6, "no", "WORK"],
        [24, "minusbox", 6, "no", "A"],
        [48, "", 10, "no", "A1"],
        [48, "", 10, "check", "A2"],
        [48, "", 10, "check", "A3"],
        [48, "", 10, "check", "A4"],
        [48, "", 10, "check", "A5"],
        [48, "", 10, "check", "A6"],
        [48, "", 10, "check", "A7"],
        [48, "", 10, "check", "A8"],
        [48, "", 10, "check", "A9"],
        [24, "plusbox", 6, "bar", "B"],
        [24, "plusbox", 6, "bar", "C"],
        [24, "plusbox", 6, "bar", "D"],
        [24, "plusbox", 6, "bar", "E"],
        [24, "plusbox", 6, "bar", "F"],
        [24, "plusbox", 6, "bar", "G"],
        [24, "plusbox", 6, "bar", "H"],
        [0, "", 0, "", ""], [0, "", 0, "", ""], [0, "", 0, "", ""], [0, "", 0, "", ""], [0, "", 0, "", ""], [0, "", 0, "", ""], [0, "", 0, "", ""]
    ];

    const tree = document.getElementById("tree");
    tree.innerHTML = treeRows.map((row, i) => {
        const [pad, exp, dots, status, name] = row;
        let cell = "";
        if (exp) cell += `<svg class="w-[9px] h-[9px] shrink-0"><use href="#${exp}"/></svg>`;
        if (dots) cell += `<span class="h-px border-t border-dotted border-[#999] shrink-0" style="width:${dots - 2}px;margin:0 1px"></span>`;
        if (status === "bar") cell += `<span class="w-[14px] h-[16px] flex justify-center shrink-0"><span class="w-[2px] h-[16px] bg-gradient-to-b from-[#ffcf4a] from-80% via-white via-80% to-[#ffcf4a] to-90%"></span></span><span class="w-[2px] shrink-0"></span>`;
        else if (status) cell += `<svg class="w-[14px] h-[14px] shrink-0 mr-[2px]"><use href="#${status}"/></svg>`;
        if (name && name !== "NC_PROGRAM") cell += `<svg class="w-[14px] h-[14px] shrink-0 mr-[4px]"><use href="#folder"/></svg>`;
        cell += `<span>${name}</span>`;
        const shade = i % 2 ? "bg-[#f9f9f9]" : "bg-white";
        return `<div class="h-[20px] flex border-b border-[#ececec] ${shade} text-[13px] text-[#333] font-['Open_Sans','Noto_Sans_CJK_SC',sans-serif]">
            <div class="w-[199px] flex items-center" style="padding-left:${pad}px">${cell}</div>
            <div class="w-px bg-black"></div>
            <div class="w-[100px] border-r border-[#ececec]"></div>
            <div class="w-[49px] border-r border-[#ececec]"></div>
            <div class="w-[100px] border-r border-[#ececec]"></div>
            <div class="w-[100px] border-r border-[#ececec]"></div>
        </div>`;
    }).join("");

    // NX version info table (Latin in a label stays regular weight)
    const infoRows = [
        ["版本", "1899"],
        ["部件文件兼容性", "保存的部件可以在 1899 或更高版本中打开。"],
        ["内部版本", "1700"],
        ["通道", "主要"],
        ['<span class="font-normal">Parasolid</span> 版本', "32.0 (build 152)"],
        ['服务器 <span class="font-normal">ID</span>', "1002010 - *SolidSQUAD*"],
        ["节点名", "sc-201912151504"],
        ["机器类型", "GenuineIntel Family 6 Model 14 Stepping 10, Intel(R) Core(TM) i7-8700K CPU @ 3.70GHz"],
        ["已分配的最大内存", "303 MB"],
        ["当前分配的内存", "303 MB (12832 MB 为可能的最大值)"],
        ["物理内存", "16228 MB"],
        ["总的可用虚拟空间", "19172 MB"],
        ["总的空闲的虚拟空间", "12529 MB"],
        ["显示节点", "不可用"],
        ["操作系统版本", "Windows NT (x64) 6.3 Windows 10 Enterprise (Build 14393)"],
        ["", ""]
    ];
    document.getElementById("info").innerHTML = infoRows.map((row, i) => {
        const shade = i % 2 ? "bg-[#f8f8f8]" : "bg-white";
        const height = row[0] === "机器类型" ? "h-[33px]" : "h-[19px]";
        return `<div class="flex ${height} border-b-2 border-[#dcdcdc] ${shade} leading-[15px]">
            <div class="w-[224px] shrink-0 pl-[2px] pt-[3px] border-r-2 border-[#dcdcdc] flex items-center font-bold whitespace-pre">${row[0]}</div>
            <div class="pl-[3px] pr-[8px] pt-[3px] flex items-center">${row[1]}</div>
        </div>`;
    }).join("");
</script>
</body>
</html>
